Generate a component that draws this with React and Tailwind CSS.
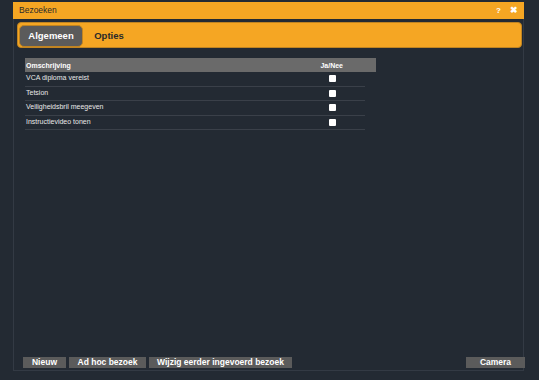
import React from "react";

const rows = [
  "VCA diploma vereist",
  "Tetsion",
  "Veiligheidsbril meegeven",
  "Instructievideo tonen",
];

export default function App() {
  return (
    <div
      className="w-[539px] h-[380px] bg-[#232a33] overflow-hidden pt-[2px] pl-[13px]"
      style={{ fontFamily: '"Liberation Sans", Arial, sans-serif' }}
    >
      <div className="w-[511px] h-[369px] flex flex-col border-x border-b border-[#333a44]">
        {/* Title bar */}
        <div className="h-[17px] bg-[#f5a623] flex items-center pl-[6px] pr-[6px] -mx-px">
          <span className="text-[8.5px] text-[#2a2a2a] leading-none">Bezoeken</span>
          <div className="ml-auto flex items-center gap-[9px] text-white font-bold leading-none">
            <span className="text-[8px]">?</span>
            <span className="text-[9px]">✖</span>
          </div>
        </div>

        {/* Body */}
        <div className="flex-1 flex flex-col pt-[3px] pl-[3px] pr-[1px] pb-[2px]">
          {/* Tab bar */}
          <div className="h-[26px] bg-[#f5a623] border border-[#c08422] rounded-[4px] flex items-end pl-[1px]">
            <div className="h-[22px] w-[64px] bg-[#5b5b5b] border border-[#c08422] rounded-[5px] flex items-center justify-center">
              <span className="text-[9.5px] font-bold text-white leading-none">Algemeen</span>
            </div>
            <div className="h-[22px] w-[52px] flex items-center justify-center">
              <span className="text-[9.5px] font-bold text-[#2a2a2a] leading-none">Opties</span>
            </div>
          </div>

          {/* Table */}
          <div className="mt-[10px] ml-[8px] w-[351px]">
            <div className="h-[14px] bg-[#6a6a6a] flex items-center text-white font-bold text-[7px] leading-none">
              <span className="pl-[1px]">Omschrijving</span>
              <span className="ml-auto mr-[33px]">Ja/Nee</span>
            </div>
            {rows.map((r) => (
              <div
                key={r}
                className="h-[14.5px] w-[340px] border-b border-[#3a4049] flex items-start pt-[1px] text-[7px] text-[#e8e8e8] leading-[9px]"
              >
                <span className="pl-[1px]">{r}</span>
                <span className="ml-[auto] mr-[29px] mt-[2px] w-[7px] h-[7px] bg-white rounded-[1px]" />
              </div>
            ))}
          </div>

          <div className="flex-1" />

          {/* Buttons */}
          <div className="flex items-center pl-[6px]">
            <button className="h-[11px] w-[43px] bg-[#5b5b5b] text-white font-bold text-[8.5px] leading-none flex items-center justify-center">
              Nieuw
            </button>
            <button className="ml-[3px] h-[11px] w-[77px] bg-[#5b5b5b] text-white font-bold text-[8.5px] leading-none flex items-center justify-center">
              Ad hoc bezoek
            </button>
            <button className="ml-[3px] h-[11px] w-[143px] bg-[#5b5b5b] text-white font-bold text-[8.5px] leading-none flex items-center justify-center">
              Wijzig eerder ingevoerd bezoek
            </button>
            <button className="ml-auto -mr-[3px] h-[11px] w-[59px] bg-[#5b5b5b] text-white font-bold text-[8.5px] leading-none flex items-center justify-center">
              Camera
            </button>
          </div>
        </div>
      </div>
    </div>
  );
}
